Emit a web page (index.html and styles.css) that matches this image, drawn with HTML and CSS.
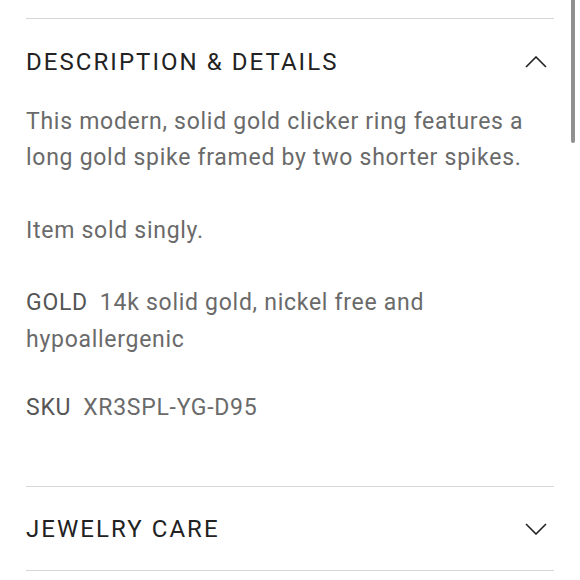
FILE: index.html
```html
<!DOCTYPE html>
<html lang="en">
<head>
<meta charset="utf-8">
<title>Description &amp; Details</title>
<link rel="stylesheet" href="styles.css">
</head>
<body>
<div class="page">
  <section class="accordion open">
    <div class="acc-head">
      <h2 class="acc-title">DESCRIPTION &amp; DETAILS</h2>
      <svg class="chev" viewBox="0 0 22 12" width="22" height="12" aria-hidden="true"><path d="M1 11 L11 1 L21 11" fill="none" stroke="#222" stroke-width="1.6"/></svg>
    </div>
    <div class="acc-body">
      <p class="para">This modern, solid gold clicker ring features a long gold spike framed by two shorter spikes.</p>
      <p class="para gap-line">Item sold singly.</p>
      <p class="para spec gold"><span class="label">GOLD</span><span class="value">14k solid gold, nickel free and</span><span class="cont">hypoallergenic</span></p>
      <p class="para spec sku"><span class="label">SKU</span><span class="value">XR3SPL-YG-D95</span></p>
    </div>
  </section>
  <section class="accordion last">
    <div class="acc-head second">
      <h2 class="acc-title">JEWELRY CARE</h2>
      <svg class="chev" viewBox="0 0 22 12" width="22" height="12" aria-hidden="true"><path d="M1 1 L11 11 L21 1" fill="none" stroke="#222" stroke-width="1.6"/></svg>
    </div>
  </section>
</div>
<div class="scrollbar"></div>
</body>
</html>
```
FILE: styles.css
```css
html, body {
  margin: 0;
  padding: 0;
  background: #fff;
}
body {
  font-family: Roboto, "Liberation Sans", sans-serif;
  width: 580px;
  height: 580px;
  overflow: hidden;
  position: relative;
}
.page {
  padding: 18px 26px 0 26px;
  width: 528px;
}
.accordion {
  border-top: 1px solid #d6d6d6;
}
.accordion.last {
  border-bottom: 1px solid #d6d6d6;
}
.acc-head {
  height: 85px;
  display: flex;
  align-items: center;
  justify-content: space-between;
  padding-right: 7px;
}
.acc-head.second {
  height: 83px;
}
.acc-title {
  margin: 0;
  font-weight: 400;
  font-size: 24px;
  line-height: 24px;
  letter-spacing: 2.05px;
  color: #222;
}
.chev {
  display: block;
  width: 22px;
  height: 12px;
}
.acc-body {
  padding-bottom: 60px;
  padding-right: 20px;
}
.para {
  margin: 0;
  font-size: 23px;
  line-height: 36px;
  letter-spacing: 0.72px;
  color: #6a6a6a;
}
.gap-line {
  margin-top: 37px;
}
.gold {
  margin-top: 35px;
  line-height: 37px;
}
.sku {
  margin-top: 32px;
}
.label {
  margin-right: 12px;
  color: #555;
}
.cont {
  display: block;
}
.scrollbar {
  position: absolute;
  top: 0;
  left: 571px;
  width: 4px;
  height: 143px;
  background: #909090;
  border-radius: 0 0 2px 2px;
}
```
